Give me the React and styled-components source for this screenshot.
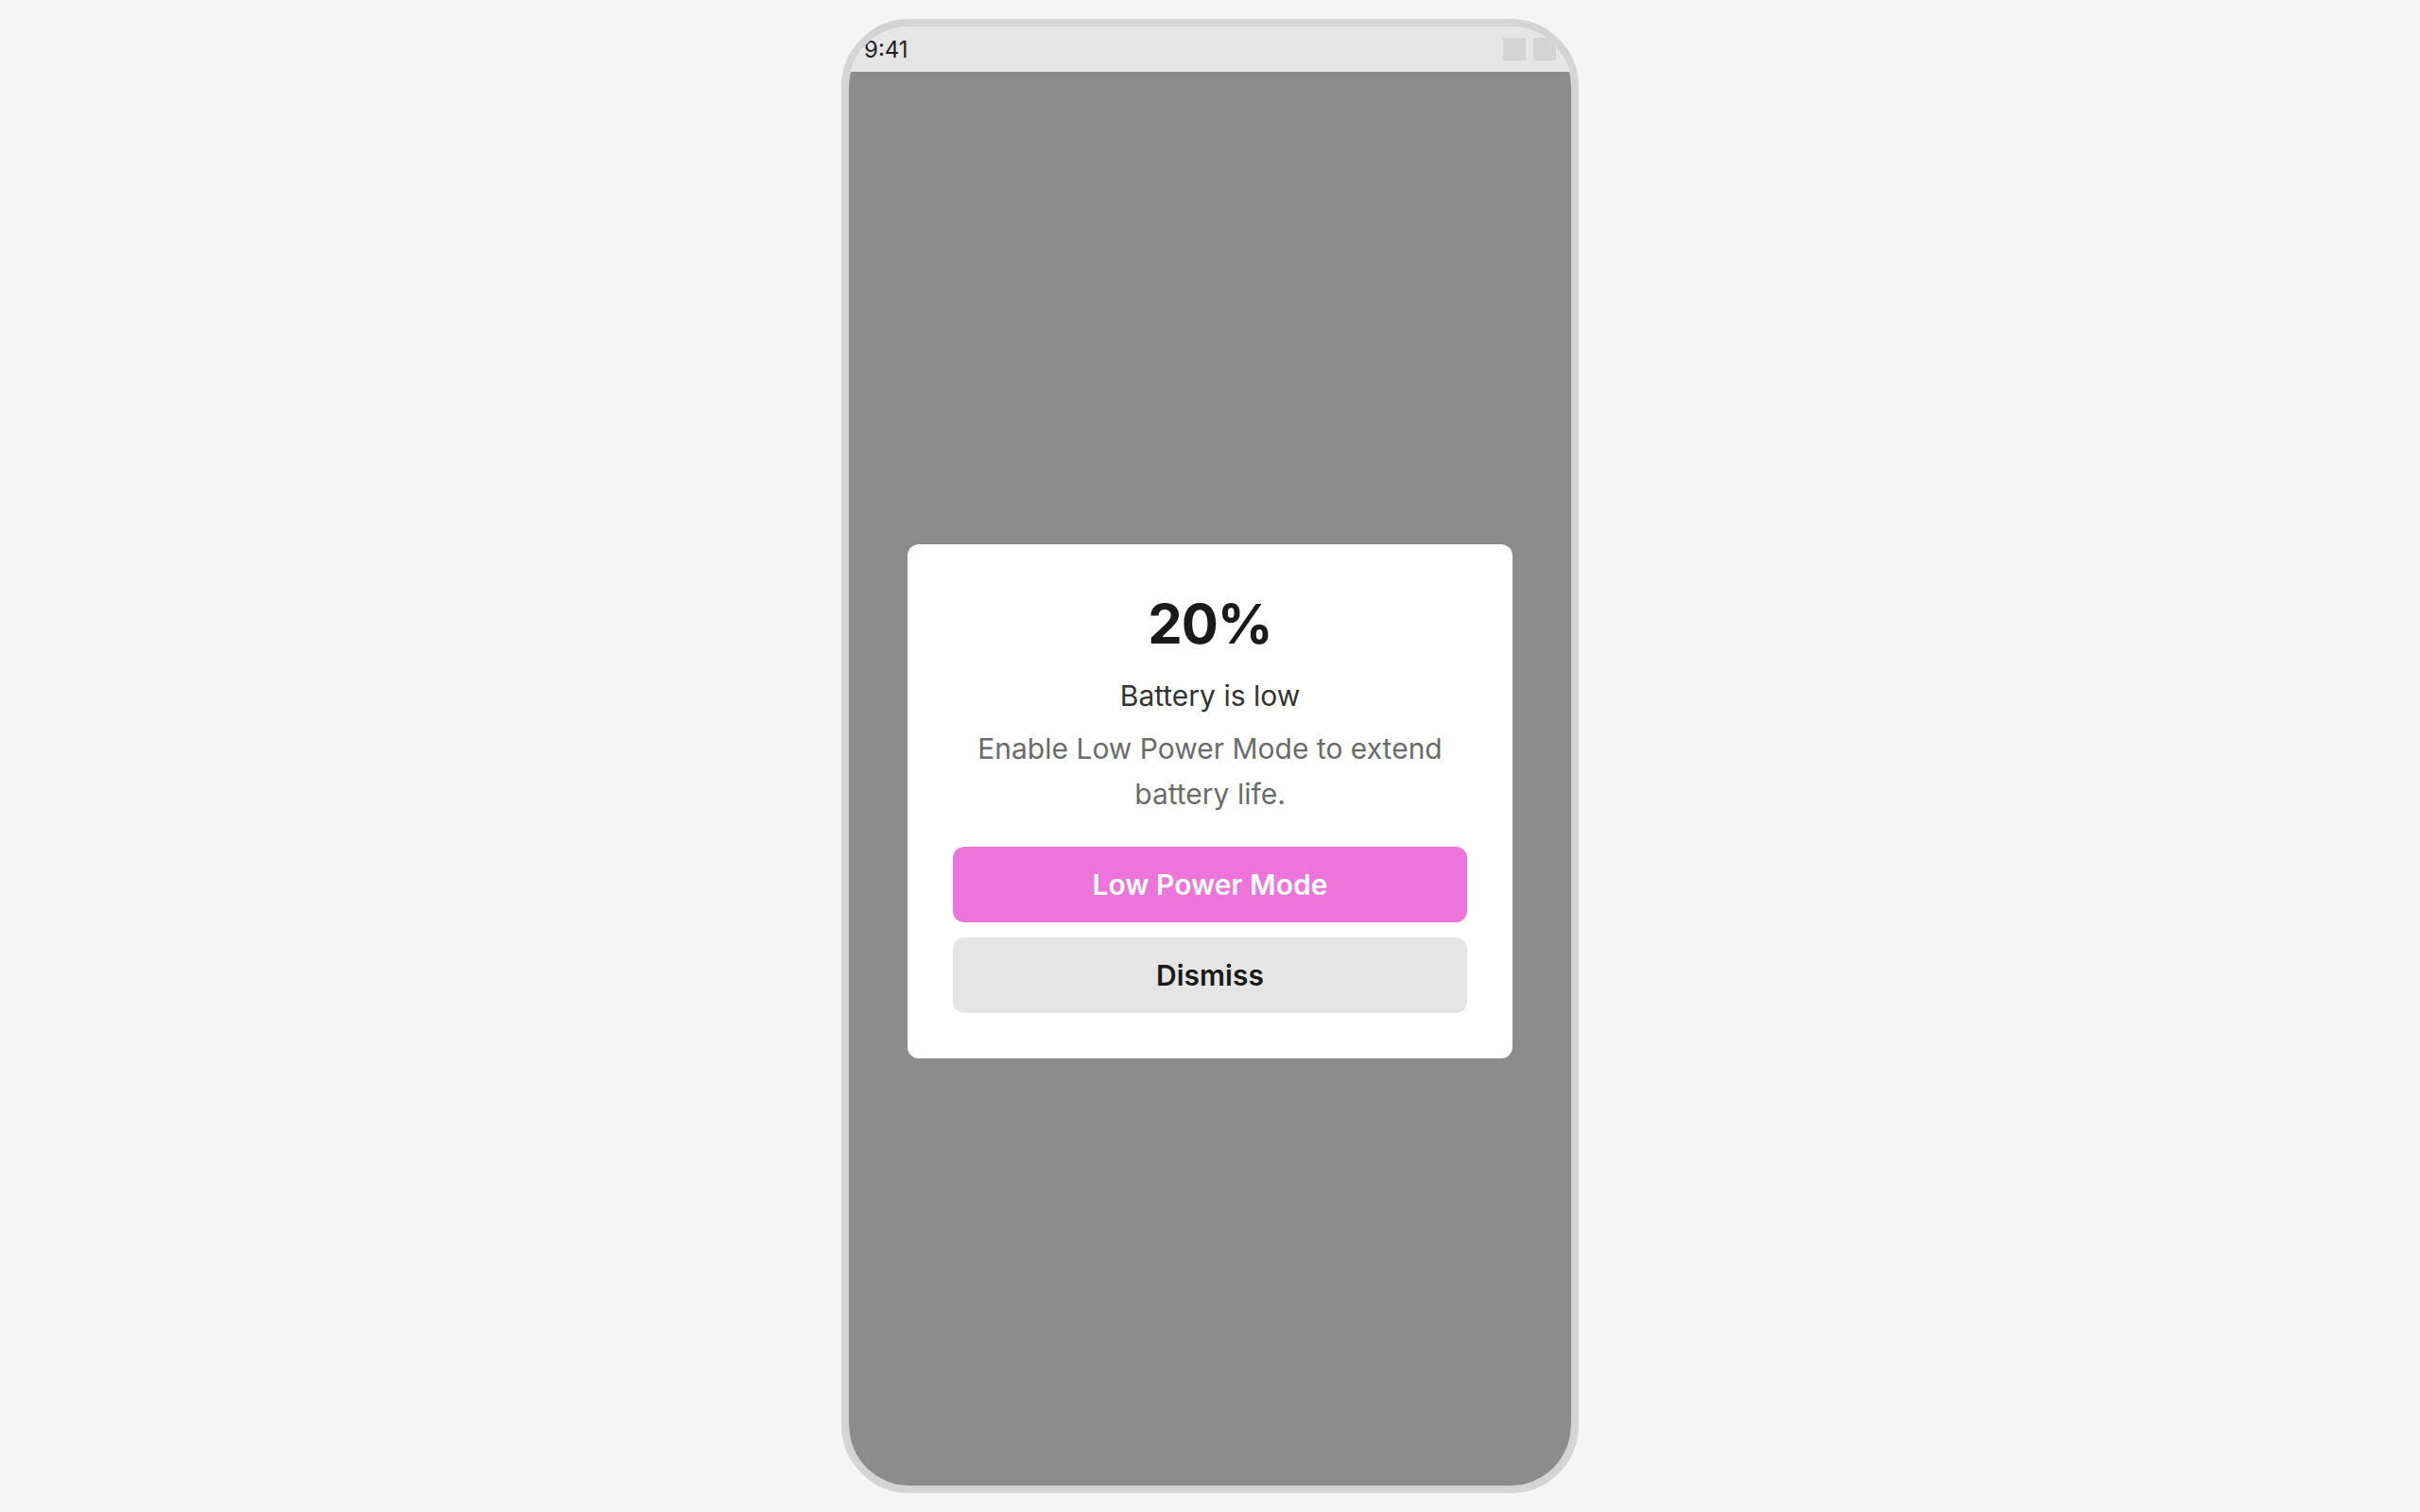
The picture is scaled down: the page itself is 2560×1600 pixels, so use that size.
import React from 'react';
import styled, { createGlobalStyle } from 'styled-components';

const GlobalStyle = createGlobalStyle`
  html, body {
    margin: 0;
    padding: 0;
    background: #f5f5f5;
    font-family: Inter, "Noto Sans", "DejaVu Sans", sans-serif;
  }
  * {
    box-sizing: border-box;
  }
`

const Page = styled.div`
  min-height: 100vh;
  display: flex;
  align-items: center;
  justify-content: center;
`

const Phone = styled.div`
  width: 780px;
  height: 1560px;
  border: 8px solid #d4d4d4;
  border-radius: 72px;
  overflow: hidden;
  display: flex;
  flex-direction: column;
  background: #ffffff;
`

const StatusBar = styled.div`
  height: 48px;
  flex-shrink: 0;
  padding: 0 16px;
  display: flex;
  align-items: center;
  justify-content: space-between;
  background: #e5e5e5;
  color: #1f1f1f;
  font-size: 24px;
`

const StatusIcons = styled.div`
  display: flex;
  gap: 8px;
`

const StatusIcon = styled.span`
  width: 24px;
  height: 24px;
  background: #d4d4d4;
`

const Overlay = styled.div`
  flex: 1;
  background: #8c8c8c;
  padding-top: 48px;
  display: flex;
  align-items: center;
  justify-content: center;
`

const Dialog = styled.div`
  width: 640px;
  padding: 48px;
  background: #ffffff;
  border-radius: 12px;
  display: flex;
  flex-direction: column;
  align-items: center;
  text-align: center;
`

const Percent = styled.div`
  font-size: 58px;
  line-height: 72px;
  font-weight: 700;
  letter-spacing: -1px;
  color: #1a1a1a;
  margin-bottom: 16px;
`

const Title = styled.div`
  font-size: 30px;
  line-height: 48px;
  color: #333333;
  margin-bottom: 8px;
`

const Message = styled.p`
  margin: 0 0 32px;
  font-size: 30px;
  line-height: 48px;
  color: #6b6b6b;
`

const Actions = styled.div`
  width: 100%;
  display: flex;
  flex-direction: column;
  gap: 16px;
`

const Button = styled.button`
  height: 80px;
  width: 100%;
  border: none;
  border-radius: 12px;
  font-family: inherit;
  font-size: 30px;
  font-weight: 600;
  cursor: pointer;
  background: ${p => p.primary ? '#ec74da' : '#e5e5e5'};
  color: ${p => p.primary ? '#ffffff' : '#1a1a1a'};
`

export default function App() {
  return (
    <Page>
      <GlobalStyle />
      <Phone>
        <StatusBar>
          <span>9:41</span>
          <StatusIcons>
            <StatusIcon />
            <StatusIcon />
          </StatusIcons>
        </StatusBar>
        <Overlay>
          <Dialog>
            <Percent>20%</Percent>
            <Title>Battery is low</Title>
            <Message>Enable Low Power Mode to extend battery life.</Message>
            <Actions>
              <Button primary>Low Power Mode</Button>
              <Button>Dismiss</Button>
            </Actions>
          </Dialog>
        </Overlay>
      </Phone>
    </Page>
  );
}
